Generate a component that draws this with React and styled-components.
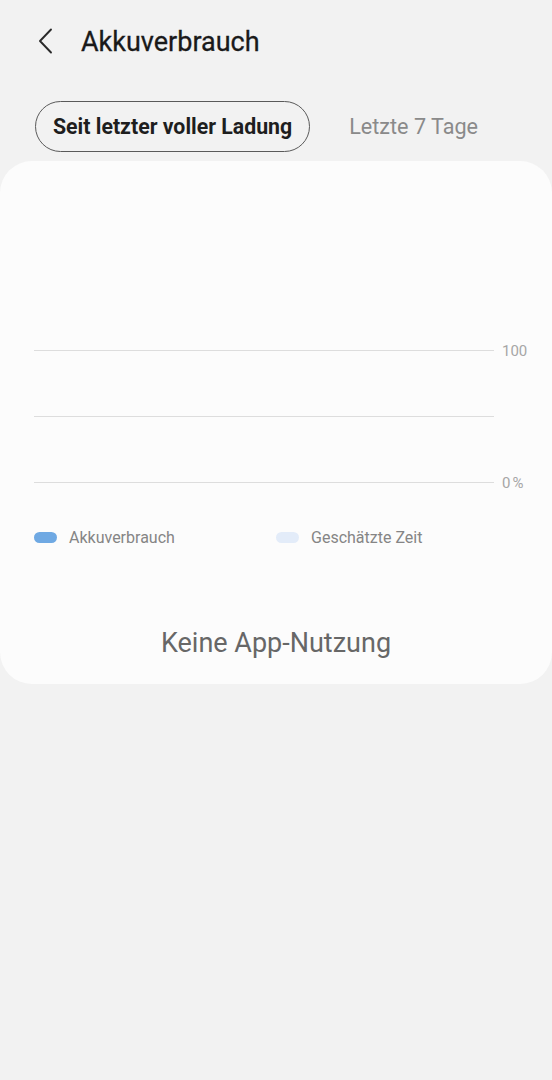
import React from "react";
import styled, { createGlobalStyle } from "styled-components";

const Global = createGlobalStyle`
  html, body { margin: 0; padding: 0; background: #f2f2f2; }
  body { font-family: Roboto, "Noto Sans", sans-serif; }
`;

const Page = styled.div`
  width: 552px;
  min-height: 1080px;
  background: #f2f2f2;
  display: flex;
  flex-direction: column;
`;

const Header = styled.header`
  height: 84px;
  display: flex;
  align-items: center;
  padding-left: 33px;
  gap: 24px;
`;

const BackButton = styled.button`
  width: 24px;
  height: 30px;
  padding: 0;
  border: none;
  background: none;
  display: flex;
  align-items: center;
  justify-content: center;
  margin-top: -2px;
`;

const Title = styled.h1`
  margin: 0;
  font-size: 27px;
  font-weight: 400;
  color: #1a1a1a;
  letter-spacing: 0;
  -webkit-text-stroke: 0.3px #1a1a1a;
`;

const Tabs = styled.div`
  display: flex;
  align-items: center;
  padding: 17px 0 0 35px;
  gap: 39px;
`;

const Tab = styled.button`
  height: 51px;
  padding: 0 ${(p) => (p.$active ? "17px" : "0")};
  border: ${(p) => (p.$active ? "1px solid #5a5a5a" : "none")};
  border-radius: 26px;
  background: transparent;
  font-family: Roboto, sans-serif;
  font-size: ${(p) => (p.$active ? "21.3px" : "21.6px")};
  font-weight: ${(p) => (p.$active ? 700 : 400)};
  color: ${(p) => (p.$active ? "#1e1e1e" : "#8a8a8a")};
`;

const Card = styled.section`
  margin-top: 9px;
  height: 523px;
  background: #fcfcfc;
  border-radius: 32px;
  display: flex;
  flex-direction: column;
  padding: 0 0 0 34px;
  box-sizing: border-box;
`;

const Chart = styled.div`
  margin-top: 189px;
  display: flex;
  flex-direction: column;
  gap: 65px;
`;

const GridRow = styled.div`
  display: flex;
  align-items: center;
  height: 1px;
`;

const GridLine = styled.div`
  width: 460px;
  height: 1px;
  background: #dddddd;
`;

const AxisLabel = styled.span`
  margin-left: 8px;
  font-size: 15px;
  color: #a6a6a6;
  letter-spacing: ${(p) => (p.$spaced ? "2px" : "0")};
`;

const Legend = styled.div`
  margin-top: 45px;
  display: flex;
  align-items: center;
`;

const LegendItem = styled.div`
  display: flex;
  align-items: center;
  gap: 12px;
  width: 242px;
`;

const Swatch = styled.span`
  width: 23px;
  height: 11px;
  border-radius: 6px;
  background: ${(p) => p.$color};
`;

const LegendText = styled.span`
  font-size: 16px;
  color: #858585;
`;

const Empty = styled.div`
  margin-top: 80px;
  margin-left: -34px;
  text-align: center;
  font-size: 27px;
  color: #676767;
`;

export default function App() {
  return (
    <>
      <Global />
      <Page>
        <Header>
          <BackButton aria-label="Zurück">
            <svg width="16" height="26" viewBox="0 0 16 26" fill="none">
              <path d="M14 1.5 L3 13 L14 24.5" stroke="#2a2a2a" strokeWidth="1.9" strokeLinecap="round" strokeLinejoin="round" />
            </svg>
          </BackButton>
          <Title>Akkuverbrauch</Title>
        </Header>
        <Tabs>
          <Tab $active>Seit letzter voller Ladung</Tab>
          <Tab>Letzte 7 Tage</Tab>
        </Tabs>
        <Card>
          <Chart>
            <GridRow>
              <GridLine />
              <AxisLabel>100</AxisLabel>
            </GridRow>
            <GridRow>
              <GridLine />
            </GridRow>
            <GridRow>
              <GridLine />
              <AxisLabel $spaced>0%</AxisLabel>
            </GridRow>
          </Chart>
          <Legend>
            <LegendItem>
              <Swatch $color="#6fa9e3" />
              <LegendText>Akkuverbrauch</LegendText>
            </LegendItem>
            <LegendItem>
              <Swatch $color="#e3ecf9" />
              <LegendText>Geschätzte Zeit</LegendText>
            </LegendItem>
          </Legend>
          <Empty>Keine App-Nutzung</Empty>
        </Card>
      </Page>
    </>
  );
}
